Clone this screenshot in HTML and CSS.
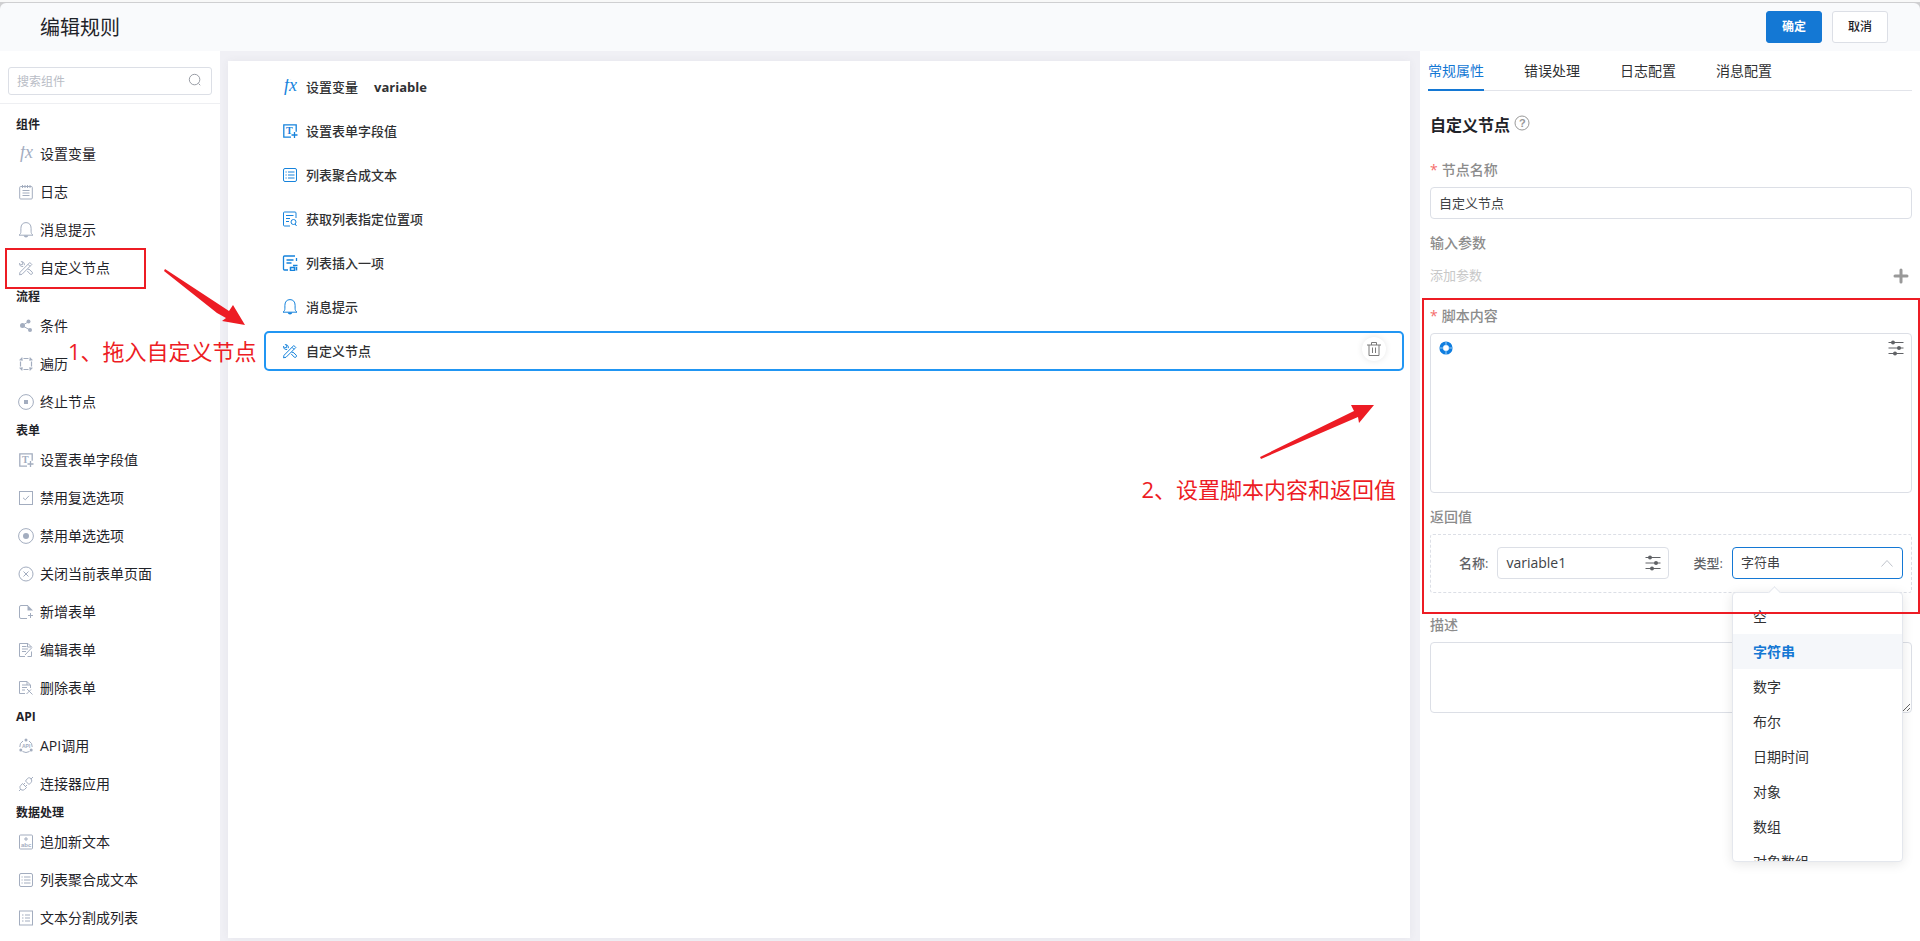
FILE: index.html
```html
<!DOCTYPE html>
<html lang="zh-CN">
<head>
  <meta charset="UTF-8" />
  <meta name="viewport" content="width=device-width, initial-scale=1.0" />
  <title>编辑规则</title>
  <link rel="stylesheet" href="styles.css">
</head>
<body>
  <!-- icon set -->
  <svg class="sprite" aria-hidden="true">
    <symbol id="i-fx" viewBox="0 0 16 16"><text x="2" y="12" font-size="18" class="serif italic">fx</text></symbol>
    <symbol id="i-log" viewBox="0 0 16 16"><rect x="1.700" y="2.500" width="12.600" height="12.500" rx="1"/><path d="M4.500 1v3M7 1v3M9.500 1v3M12 1v3M4.500 6.500h7M4.500 9h7M4.500 11.500h7"/></symbol>
    <symbol id="i-bell" viewBox="0 0 16 16"><path d="M1 13.200h14c-1.400-1-1.900-2-1.900-4V6.300C13.100 2.800 11.200.6 8 .6S2.900 2.800 2.900 6.300v2.900c0 2-.5 3-1.900 4z"/><path d="M5.700 13.500c.3 2.500 4.300 2.500 4.600 0z" class="solid"/></symbol>
    <symbol id="i-custom" viewBox="0 0 16 16"><path d="M2 12.300 11.800 2.500l2 2L4 14.300l-2.500.5zM10 4.300l2 2M9.700 9.500l1.300-.3 3.300 3c.8 1.400-.8 2.800-2 2L9.300 11M6.300 5.200c.4-2-.8-3.700-3-3.700L4.800 3 4.500 4.500 3 4.800 1.500 3.300c-.2 2.200 1.500 3.700 3.700 3.100"/></symbol>
    <symbol id="i-share" viewBox="0 0 16 16"><path d="M11 3.500 4 7.500l8 4.500"/><g class="solid"><circle cx="10.500" cy="3.500" r="2"/><circle cx="4.500" cy="7.500" r="2.500"/><circle cx="12" cy="12" r="2"/></g></symbol>
    <symbol id="i-loop" viewBox="0 0 16 16"><path d="M5.500 2.500h5M13.500 5.500v5M10.500 13.500h-5M2.500 10.500v-5" stroke-width="1.200"/><path d="M1 4.200 4.200 1l.6 3.800zM11.800 1 15 4.200l-3.800.6zM15 11.800 11.800 15l-.6-3.800zM4.200 15 1 11.800l3.800-.6z" class="solid"/></symbol>
    <symbol id="i-stop" viewBox="0 0 16 16"><circle cx="8" cy="8" r="7.400"/><rect x="6" y="6" width="4" height="4" class="solid"/></symbol>
    <symbol id="i-field" viewBox="0 0 16 16"><path d="M9 14.200H1.800V1.800h12.400v7M9.500 12h6M12.500 9v6" stroke-width="1.300"/><text x="4" y="10.500" font-size="10" font-weight="bold" class="serif">T</text></symbol>
    <symbol id="i-check" viewBox="0 0 16 16"><rect x="1.500" y="1.500" width="13" height="13"/><path d="m5 7.800 2.300 2 3.700-4"/></symbol>
    <symbol id="i-radio" viewBox="0 0 16 16"><circle cx="8" cy="8" r="7.400"/><circle cx="8" cy="8" r="3" class="solid"/></symbol>
    <symbol id="i-close" viewBox="0 0 16 16"><circle cx="8" cy="8" r="7"/><path d="m5.500 5.500 5 5m0-5-5 5"/></symbol>
    <symbol id="i-add" viewBox="0 0 16 16"><path d="M9 14.500H3q-1.500 0-1.500-1.500V3Q1.500 1.500 3 1.500h7M10 11.500h5M12.500 9v5"/><path d="M9.500 1 15 6.500H9.500z" class="solid"/></symbol>
    <symbol id="i-edit" viewBox="0 0 16 16"><path d="M7 14.500H1.500v-13H10l3.500 3.500M4 4.500h4.500M4 7h6M4 9.500h4M7 13l7-7.500M9.500 14.500h4v-5M9.500 1.500V5h4"/></symbol>
    <symbol id="i-del" viewBox="0 0 16 16"><path d="M7 13.500H1.500v-12H9L12.500 5v3M4 5h5M4 7.500h5M4 10h3M9 9l5.500 5.500M13 9.500 8.500 14M9 1.500V5h3"/></symbol>
    <symbol id="i-api" viewBox="0 0 16 16"><path d="M5 3a6.300 6.300 0 0 0-3.200 6M11 3a6.300 6.300 0 0 1 3.200 6M4.500 13.500q3.500 2 7 0"/><g class="solid"><circle cx="8" cy="2" r="1.500"/><circle cx="2.800" cy="12" r="1.500"/><circle cx="13.200" cy="12" r="1.500"/></g><text x="4" y="10" font-size="5" font-weight="bold" class="sans">API</text></symbol>
    <symbol id="i-link" viewBox="0 0 16 16"><path d="m7.500 5 3.500 3.500 2-2c1.500-1.500.5-4-1-4.500-1-.6-2 0-2.500.5zM4.500 7.500 8.500 11.500l-2 2c-1.500 1.300-3.800.5-4.300-1s-.3-2.300.5-3zM12.800 3.200 15 1M3 13l-2 2M5.500 8.500 7 7M7.500 10.500 9 9"/></symbol>
    <symbol id="i-text" viewBox="0 0 16 16"><rect x="1.500" y="1" width="13" height="14" rx="1"/><path d="M6 5h4M8 3v4"/><text x="3" y="13" font-size="6" font-weight="bold" class="sans">abc</text></symbol>
    <symbol id="i-join" viewBox="0 0 16 16"><rect x="1.500" y="1.500" width="13" height="13" rx="1.500"/><path d="M3.500 5h1.200M6 5h6.500M3.500 8h1.200M6 8h6.500M3.500 11h1.200M6 11h6.500"/></symbol>
    <symbol id="i-split" viewBox="0 0 16 16"><rect x="1.500" y="1" width="13" height="14"/><path d="M4 5h1.500M7 5h5M4 8h1.500M7 8h5M4 11h1.500M7 11h5"/></symbol>
    <symbol id="i-find" viewBox="0 0 16 16"><path d="M8 15H2.500q-1 0-1-1V2q0-1 1-1H13q1 0 1 1v5M4 4.500h7.500M4 7.500h4M4 10.500h3"/><circle cx="11.500" cy="11" r="2.500"/><path d="m13.200 13 1.300 2"/></symbol>
    <symbol id="i-insert" viewBox="0 0 16 16"><path d="M6 15H2.500q-1 0-1-1V2q0-1 1-1H13M14.500 3v3M4.500 5h7M4.500 8h5" stroke-width="1.300"/><path d="M8.500 12.500h4v3h-4zM11 10.500h4.500M14.500 12v3.500" stroke-width="1.500"/></symbol>
    <symbol id="i-search" viewBox="0 0 16 16"><circle cx="7.500" cy="7.500" r="6"/><path d="m12 12 2 2"/></symbol>
    <symbol id="i-trash" viewBox="0 0 16 16"><path d="M1 4h14M3 4v10.500h10V4M5.500 4V1.500h5V4M6.500 6.500V12M9.500 6.500V12"/></symbol>
    <symbol id="i-help" viewBox="0 0 16 16"><circle cx="8" cy="8" r="7"/><text x="5" y="12" font-size="11" class="sans">?</text></symbol>
    <symbol id="i-plus" viewBox="0 0 16 16"><path d="M8 2v12M2 8h12" stroke-width="3" stroke-linecap="round"/></symbol>
    <symbol id="i-sliders" viewBox="0 0 16 16"><path d="M.5 2.500h15M.5 8h15M.5 13.500h15"/><g class="solid"><circle cx="5" cy="2.500" r="2"/><circle cx="11" cy="8" r="2"/><circle cx="7" cy="13.500" r="2"/></g></symbol>
    <symbol id="i-ring" viewBox="0 0 16 16"><circle cx="8" cy="8" r="4.800" stroke-width="3.600"/><path d="M8 1v4.500M8 10.500V15M1 8h4.500M10.500 8H15" stroke="#9accf5"/></symbol>
    <symbol id="i-up" viewBox="0 0 16 16"><path d="m2.500 11.500 5.500-6 5.500 6"/></symbol>
  </svg>

  <div class="dialog">
    <header class="dialog-header">
      <h1>编辑规则</h1>
      <button class="btn btn-primary" type="button">确定</button>
      <button class="btn" type="button">取消</button>
    </header>

    <div class="workspace">
      <aside class="sidebar">
        <div class="search">
          <input type="text" placeholder="搜索组件" aria-label="搜索组件" />
          <svg class="icon"><use href="#i-search"/></svg>
        </div>
        <div class="palette">
          <h2>组件</h2>
          <ul>
            <li><svg class="icon"><use href="#i-fx"/></svg>设置变量</li>
            <li><svg class="icon"><use href="#i-log"/></svg>日志</li>
            <li><svg class="icon"><use href="#i-bell"/></svg>消息提示</li>
            <li><svg class="icon"><use href="#i-custom"/></svg>自定义节点</li>
          </ul>
          <h2>流程</h2>
          <ul>
            <li><svg class="icon"><use href="#i-share"/></svg>条件</li>
            <li><svg class="icon"><use href="#i-loop"/></svg>遍历</li>
            <li><svg class="icon"><use href="#i-stop"/></svg>终止节点</li>
          </ul>
          <h2>表单</h2>
          <ul>
            <li><svg class="icon"><use href="#i-field"/></svg>设置表单字段值</li>
            <li><svg class="icon"><use href="#i-check"/></svg>禁用复选选项</li>
            <li><svg class="icon"><use href="#i-radio"/></svg>禁用单选选项</li>
            <li><svg class="icon"><use href="#i-close"/></svg>关闭当前表单页面</li>
            <li><svg class="icon"><use href="#i-add"/></svg>新增表单</li>
            <li><svg class="icon"><use href="#i-edit"/></svg>编辑表单</li>
            <li><svg class="icon"><use href="#i-del"/></svg>删除表单</li>
          </ul>
          <h2>API</h2>
          <ul>
            <li><svg class="icon"><use href="#i-api"/></svg>API调用</li>
            <li><svg class="icon"><use href="#i-link"/></svg>连接器应用</li>
          </ul>
          <h2>数据处理</h2>
          <ul>
            <li><svg class="icon"><use href="#i-text"/></svg>追加新文本</li>
            <li><svg class="icon"><use href="#i-join"/></svg>列表聚合成文本</li>
            <li><svg class="icon"><use href="#i-split"/></svg>文本分割成列表</li>
          </ul>
        </div>
      </aside>

      <main class="stage">
        <div class="canvas">
          <div class="node"><svg class="icon"><use href="#i-fx"/></svg>设置变量<span class="node-arg">variable</span></div>
          <div class="node"><svg class="icon"><use href="#i-field"/></svg>设置表单字段值</div>
          <div class="node"><svg class="icon"><use href="#i-join"/></svg>列表聚合成文本</div>
          <div class="node"><svg class="icon"><use href="#i-find"/></svg>获取列表指定位置项</div>
          <div class="node"><svg class="icon"><use href="#i-insert"/></svg>列表插入一项</div>
          <div class="node"><svg class="icon"><use href="#i-bell"/></svg>消息提示</div>
          <div class="node selected">
            <svg class="icon"><use href="#i-custom"/></svg>自定义节点
            <button class="node-delete" type="button" aria-label="删除"><svg class="icon"><use href="#i-trash"/></svg></button>
          </div>
        </div>
      </main>

      <section class="props">
        <nav class="tabs">
          <a href="#" class="active">常规属性</a>
          <a href="#">错误处理</a>
          <a href="#">日志配置</a>
          <a href="#">消息配置</a>
        </nav>
        <form class="form">
          <h3>自定义节点<svg class="icon"><use href="#i-help"/></svg></h3>

          <label class="field-label required" for="nodeName">节点名称</label>
          <input class="control" id="nodeName" type="text" value="自定义节点" />

          <div class="field-label params-label">输入参数</div>
          <div class="params">
            <span>添加参数</span>
            <button type="button" aria-label="添加参数"><svg class="icon"><use href="#i-plus"/></svg></button>
          </div>

          <label class="field-label required" for="script">脚本内容</label>
          <div class="script">
            <textarea class="control" id="script"></textarea>
            <svg class="icon script-ring"><use href="#i-ring"/></svg>
            <svg class="icon script-set"><use href="#i-sliders"/></svg>
          </div>

          <div class="field-label">返回值</div>
          <div class="returns">
            <label for="retName">名称:</label>
            <div class="inner">
              <input class="control" id="retName" type="text" value="variable1" />
              <svg class="icon"><use href="#i-sliders"/></svg>
            </div>
            <label for="retType">类型:</label>
            <div class="inner">
              <select class="control open" id="retType">
                <option>空</option>
                <option selected>字符串</option>
                <option>数字</option>
                <option>布尔</option>
                <option>日期时间</option>
                <option>对象</option>
                <option>数组</option>
                <option>对象数组</option>
              </select>
              <svg class="icon arrow"><use href="#i-up"/></svg>
              <div class="dropdown">
                <ul>
                  <li>空</li>
                  <li class="current">字符串</li>
                  <li>数字</li>
                  <li>布尔</li>
                  <li>日期时间</li>
                  <li>对象</li>
                  <li>数组</li>
                  <li>对象数组</li>
                </ul>
              </div>
            </div>
          </div>

          <label class="field-label desc-label" for="desc">描述</label>
          <textarea class="control desc" id="desc"></textarea>
        </form>
      </section>
    </div>
  </div>

  <!-- tutorial marks over the editor -->
  <div class="mark mark-node"></div>
  <div class="mark mark-script"></div>
  <svg class="arrow-1" viewBox="0 0 82 58"><path d="M1 1 65 43 69 37 81 57 58 53 62 50 53 45 0 3z"/></svg>
  <svg class="arrow-2" viewBox="0 0 114 54"><path d="M0 52 94 6 91 0h23L99 18l-1-6L1 54z"/></svg>
  <p class="step step-1">1、拖入自定义节点</p>
  <p class="step step-2">2、设置脚本内容和返回值</p>
</body>
</html>
```
FILE: styles.css
```css
* {
  box-sizing: border-box;
}
body {
  margin: 0;
  border-top: 2px solid #f8f8f8;
  background: #cfcfd1;
  font-family: "Open Sans", "Noto Sans CJK SC", sans-serif;
  font-size: 14px;
  line-height: 20px;
  color: #1f2329;
  height: 100vh;
  position: relative;
  overflow: hidden;
}
h1, h2, h3, p, ul {
  margin: 0;
  padding: 0;
}
ul {
  list-style: none;
}
input, select, textarea, button {
  font: inherit;
  color: inherit;
}
button {
  cursor: pointer;
}
.sprite {
  display: none;
}
.icon {
  width: 16px;
  height: 16px;
  flex: none;
  fill: none;
  stroke: currentColor;
  stroke-width: 1;
}
.solid {
  fill: currentColor;
  stroke: none;
}
.serif, .sans {
  fill: currentColor;
  stroke: none;
  font-family: "Liberation Serif", serif;
}
.sans {
  font-family: "Liberation Sans", sans-serif;
}
.italic {
  font-style: italic;
}

.dialog {
  height: 100%;
  padding-top: 1px;
  display: flex;
  flex-direction: column;
}
.dialog-header {
  height: 48px;
  flex: none;
  padding: 0 32px 0 40px;
  display: flex;
  align-items: center;
  gap: 10px;
  background: #f9fafc;
  border-radius: 6px 6px 0 0;
}
.dialog-header h1 {
  margin-right: auto;
  padding-top: 2px;
  font-size: 20px;
  font-weight: 400;
}
.btn {
  width: 56px;
  height: 32px;
  padding: 0;
  border: 1px solid #dcdfe6;
  border-radius: 3px;
  background: #fff;
  font-size: 12px;
  font-weight: 500;
}
.btn-primary {
  border-color: #1478d4;
  background: #1478d4;
  color: #fff;
  font-weight: 700;
}
.workspace {
  flex: 1;
  min-height: 0;
  display: flex;
  background: #f0f0f5;
}

/* component palette */
.sidebar {
  width: 220px;
  flex: none;
  background: #fff;
  overflow: hidden;
}
.search {
  position: relative;
  padding: 16px 8px 8px;
  border-bottom: 1px solid #eeeff2;
}
.search input {
  display: block;
  width: 100%;
  height: 28px;
  padding: 0 32px 0 8px;
  border: 1px solid #dcdfe6;
  border-radius: 3px;
  font-size: 12px;
}
.search input::placeholder {
  color: #b9bdc6;
}
.search .icon {
  position: absolute;
  top: 22px;
  right: 18px;
  width: 14px;
  height: 14px;
  color: #8b9099;
}
.palette {
  padding-top: 11px;
}
.palette h2 {
  padding-left: 16px;
  font-size: 12px;
  line-height: 20px;
}
.palette li {
  height: 38px;
  padding-left: 18px;
  display: flex;
  align-items: center;
  gap: 6px;
}
.palette .icon {
  color: #a3adbf;
}

/* flow */
.stage {
  flex: 1;
  min-width: 0;
  padding: 10px 10px 3px 8px;
  display: flex;
}
.canvas {
  flex: 1;
  padding: 6px 6px 0 36px;
  background: #fff;
  box-shadow: 0 0 8px rgba(60, 60, 90, 0.06);
}
.node {
  height: 40px;
  margin-bottom: 4px;
  padding: 0 16px;
  border: 2px solid transparent;
  border-radius: 5px;
  display: flex;
  align-items: center;
  gap: 8px;
  font-size: 13px;
  font-weight: 500;
  color: #303133;
}
.node > .icon {
  color: #1683dc;
}
.node.selected {
  border-color: #2196f3;
}
.node-arg {
  margin-left: 8px;
  font-weight: 700;
}
.node-delete {
  width: 24px;
  height: 24px;
  margin-left: auto;
  margin-bottom: 4px;
  padding: 0;
  border: 0;
  border-radius: 50%;
  display: flex;
  align-items: center;
  justify-content: center;
  background: #fff;
  box-shadow: 0 0 6px rgba(0, 0, 0, 0.1);
  color: #7a7a7a;
}

/* properties */
.props {
  width: 500px;
  flex: none;
  padding: 0 8px;
  background: #fff;
}
.tabs {
  height: 40px;
  display: flex;
  gap: 40px;
  border-bottom: 1px solid #e2e4ea;
}
.tabs a {
  height: 40px;
  line-height: 40px;
  color: #303133;
  text-decoration: none;
}
.tabs .active {
  border-bottom: 2px solid #1478d4;
  color: #1478d4;
}
.form {
  padding: 22px 0 0 2px;
}
.form h3 {
  margin-bottom: 21px;
  display: flex;
  gap: 4px;
  font-size: 16px;
  line-height: 24px;
}
.form h3 .icon {
  margin-top: 2px;
  color: #999;
}
.field-label {
  display: block;
  margin-bottom: 5px;
  line-height: 24px;
  font-weight: 500;
  color: #8c8c8c;
}
.required::before {
  content: "*";
  margin-right: 4px;
  color: #f56c6c;
}
.control {
  display: block;
  width: 100%;
  height: 32px;
  padding: 0 8px 2px;
  border: 1px solid #dcdfe6;
  border-radius: 4px;
  background: #fff;
  font-size: 13px;
  color: #404246;
  outline: none;
}
.params-label {
  margin-top: 12px;
}
.params {
  height: 34px;
  margin-bottom: 10px;
  padding: 5px 3px 0 0;
  display: flex;
  align-items: flex-start;
  justify-content: space-between;
  font-size: 13px;
  color: #c8c8c8;
}
.params button {
  padding: 3px 0;
  border: 0;
  background: none;
  display: flex;
  color: #999;
}
.script {
  position: relative;
  margin-bottom: 12px;
}
.script .control {
  height: 160px;
  resize: none;
}
.script-ring, .script-set {
  position: absolute;
  top: 7px;
}
.script-ring {
  left: 8px;
  color: #0f7ee0;
}
.script-set {
  right: 8px;
  color: #606266;
}
.returns {
  padding: 12px 8px 13px 28px;
  display: flex;
  align-items: center;
  gap: 9px;
  border: 1px dashed #dcdfe6;
  border-radius: 3px;
  font-size: 13px;
  font-weight: 500;
  color: #606266;
}
.returns .inner {
  flex: 1;
  position: relative;
  font-weight: 400;
}
.returns .inner + label {
  margin-left: 16px;
}
.returns .control {
  font-size: 14px;
}
.returns select.control {
  appearance: none;
  font-size: 13px;
}
.control.open {
  border-color: #1478d4;
}
.inner > .icon {
  position: absolute;
  top: 8px;
  right: 8px;
  color: #606266;
}
.inner > .arrow {
  color: #c0c4cc;
}
.dropdown {
  position: absolute;
  top: 45px;
  left: 0;
  right: 0;
  height: 270px;
  border: 1px solid #e4e7ed;
  border-radius: 4px;
  background: #fff;
  box-shadow: 0 2px 12px rgba(0, 0, 0, 0.1);
  font-size: 14px;
  color: #303133;
}
.dropdown::before {
  content: "";
  position: absolute;
  top: -5px;
  left: 37px;
  width: 8px;
  height: 8px;
  border: 1px solid #e4e7ed;
  border-width: 1px 0 0 1px;
  background: #fff;
  transform: rotate(45deg);
}
.dropdown ul {
  height: 100%;
  padding-top: 6px;
  overflow: hidden;
}
.dropdown li {
  height: 35px;
  padding-left: 20px;
  line-height: 35px;
}
.dropdown .current {
  background: #f5f7fa;
  font-weight: 700;
  color: #1478d4;
}
.desc-label {
  margin-top: 20px;
}
.desc {
  height: 71px;
}

/* tutorial marks */
.mark, .step, .arrow-1, .arrow-2 {
  position: absolute;
  pointer-events: none;
}
.mark {
  border: 2px solid #ed1c24;
}
.mark-node {
  top: 246px;
  left: 5px;
  width: 141px;
  height: 41px;
}
.mark-script {
  top: 296px;
  right: 0;
  width: 498px;
  height: 316px;
}
.arrow-1, .arrow-2 {
  fill: #ed1c24;
}
.arrow-1 {
  top: 266px;
  left: 164px;
  width: 82px;
  height: 58px;
}
.arrow-2 {
  top: 403px;
  right: 546px;
  width: 114px;
  height: 54px;
}
.step {
  font-size: 22px;
  line-height: 30px;
  color: #ed1c24;
  white-space: nowrap;
}
.step-1 {
  top: 334px;
  left: 68px;
}
.step-2 {
  top: 472px;
  right: 524px;
}
```
